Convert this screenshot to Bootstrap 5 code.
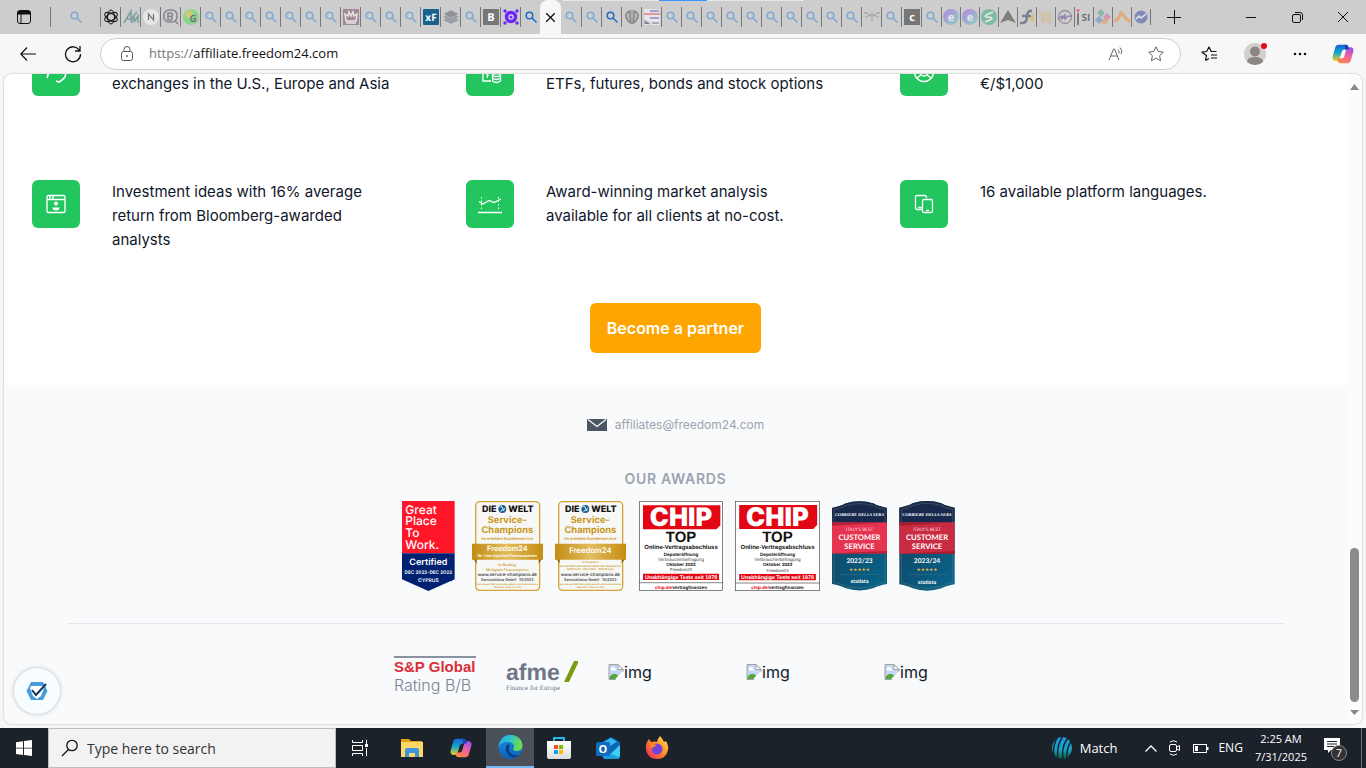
<!DOCTYPE html>
<html lang="en">
<head>
<meta charset="utf-8">
<meta name="viewport" content="width=device-width, initial-scale=1">
<title>Freedom24 affiliate</title>
<link href="https://cdn.jsdelivr.net/npm/bootstrap@5.3.0/dist/css/bootstrap.min.css" rel="stylesheet">
<style>
body{font-family:Inter,"Noto Sans",sans-serif;background:#f7f7f7;color:#0f172a}
svg{display:block;flex:none;text-rendering:geometricPrecision}
.btn{--bs-btn-padding-x:0;--bs-btn-padding-y:0;--bs-btn-border-width:0;line-height:1}
.sysfont{font-family:"Open Sans","Noto Sans",sans-serif}
.tabstrip{background:#cdcdcd;height:34px}
.tabstrip .btn{border-radius:0}
.tab-tools{width:50px}
.tab-cell{width:20px;height:20px;border-left:1px solid #777;display:flex;align-items:center;justify-content:center;flex:none}
.tab-slim{width:19px}
.tab-pinned{width:50px}
.tab-cell .dim{opacity:.5}
.tabstrip .tab-active{width:21px;height:34px;background:#f7f7f7;border-radius:8px 8px 0 0;flex:none}
.loadbar{height:1px;left:563px;width:241px;background:#e8e8e8}
.loadbar span{display:block;height:1px;width:48px;margin-left:96px;background:#3b96f5}
.winbtn{width:46px;height:34px;display:flex;align-items:center;justify-content:center}
.toolbar{height:39px}
.address{height:32px;border:1px solid #cfcfcf;border-radius:16px;background:#fff;margin-left:2px}
.address label{font-size:13px;color:#767676}
.address input{font-size:13px;border:0;outline:0;background:none;color:#111;padding:0}
.pane{background:#fff;border-radius:8px;box-shadow:0 0 2px #00000055;margin:1px 4px 4px;min-height:0}
.features{padding:0 28px;column-gap:15px;row-gap:84px;display:grid;grid-template-columns:repeat(3,1fr);margin-top:-26px}
.feature{gap:32px;font-size:15px;line-height:24px}
.feature p{max-width:284px}
.tile{width:48px;height:48px;border-radius:6px;background:#22c55e;flex:none}
.cta{width:171px;height:50px;font-size:16px;font-weight:600;border-radius:6px}
.cta,.cta:hover{background:#ffa500;color:#fff}
.cta-wrap{padding:51px 0 32px}
.site-footer{background:#f8fafc}
.mail{font-size:12px;line-height:16px;color:#9ca3af;text-decoration:none}
.awards-title{font-size:14px;line-height:20px;font-weight:600;color:#9ca3af;letter-spacing:.05em;padding:12px 0 8px}
.awards{gap:12px}
.rule{border-top:1px solid #e5e7eb;margin:32px 63px 0}
.ratings{gap:30px;padding-top:32px}
.rating-sp{width:82px;border-top:2px solid #8a91a0;font-family:"Liberation Sans",sans-serif;white-space:nowrap}
.rating-sp b{font-size:15px;line-height:18px;color:#dc2f38;display:block}
.rating-sp span{font:300 16px/18px Inter,sans-serif;color:#7b8494;display:block}
.lost{width:108px;font-size:16px;line-height:24px;color:#111827}
.lost-last{width:73px}
.widget{width:46px;height:46px;left:10px;bottom:10px;border-radius:50%;background:#f7fcff;box-shadow:0 0 4px #00000040}
.scroll{width:15px;background:#fcfcfc}
.thumb{width:9px;height:154px;border-radius:5px;background:#8b8b8b}
.taskbar{height:40px;background:#1b222a;color:#fff}
.search{width:288px;background:#f2f2f2;border:1px solid #bdbdbd}
.search input{font-size:14px;border:0;outline:0;background:none;padding:0}
.search input::placeholder{color:#333;opacity:1}
.task{width:48px;height:40px;display:flex;align-items:center;justify-content:center;border-radius:0}
.task-on,.task-on:hover{background:#4b5058;border-bottom:2px solid #76b9f5}
.apps{gap:1px}
.tray{font-size:12px;line-height:18px}
.clock{font-size:11px}
.match{font-size:13px}
</style>
</head>
<body>
<svg width="0" height="0" class="position-absolute" aria-hidden="true">
<defs>
<symbol id="lens" viewBox="0 0 12 12"><circle cx="4.5" cy="4.5" r="3.3" fill="none" stroke="currentColor" stroke-width="1.5"/><path d="M7 7l4 4" stroke="currentColor" stroke-width="1.6" stroke-linecap="round"/></symbol>
<symbol id="broken" viewBox="0 0 16 16"><path d="M1 .5h9l5 5v10H1z" fill="#c4d7f5" stroke="#a0a0a0"/><path d="M10 .5v5h5z" fill="#fff" stroke="#a0a0a0"/><path d="M3 5.500a2 2 0 0 1 4-1 1.500 1.500 0 0 1 1 2H3z" fill="#fff"/><path d="M1.500 15c0-3 2-5 5-5s4 2 4 5z" fill="#57a639"/><path d="M8 16l8-8v8z" fill="#f8fafc"/><path d="M8 15.500l7.500-7.500" stroke="#fff" stroke-width="2"/></symbol>
<linearGradient id="cpa" x1="0" y1="0" x2="0" y2="1"><stop stop-color="#1763dc"/><stop offset=".5" stop-color="#15a8c8"/><stop offset="1" stop-color="#f1d21a"/></linearGradient>
<linearGradient id="cpb" x1="0.700" y1="0" x2="0.200" y2="1"><stop stop-color="#a453e6"/><stop offset=".5" stop-color="#f2649a"/><stop offset="1" stop-color="#fb8a3c"/></linearGradient>
<symbol id="copilot" viewBox="0 0 24 24"><path d="M7 2h8c1.600 0 2.300.8 2.800 2.300L18.500 7H14c-2 0-3 1-3.500 3l-2 7C8 19 7 19.500 5 19.500H4C1 19.500 0 17.500.8 14.500L3.500 5C4.100 3 5.200 2 7 2z" fill="url(#cpa)"/><path d="M17 22H9c-1.600 0-2.300-.8-2.800-2.300L5.500 17H10c2 0 3-1 3.500-3l2-7c.5-2 1.500-2.500 3.500-2.500h1c3 0 4 2 3.200 5L20.500 19c-.6 2-1.700 3-3.500 3z" fill="url(#cpb)"/><path d="M13.800 2h1.200c1.600 0 2.300.8 2.800 2.300L18.500 7h-4.200z" fill="#1b3fae"/></symbol>
<linearGradient id="ega" x1="0" y1="0" x2="1" y2=".3"><stop stop-color="#2aa4e8"/><stop offset=".5" stop-color="#2fc3c9"/><stop offset="1" stop-color="#6ddb4c"/></linearGradient>
<linearGradient id="egb" x1="0" y1="0" x2="0" y2="1"><stop stop-color="#1a8fe0"/><stop offset="1" stop-color="#0a62bd"/></linearGradient>
<linearGradient id="gold"><stop stop-color="#c48c12"/><stop offset=".5" stop-color="#e3bd5f"/><stop offset="1" stop-color="#c48c12"/></linearGradient>
<linearGradient id="teal" x1="0" y1="0" x2="1" y2="1"><stop stop-color="#12415f"/><stop offset="1" stop-color="#07658c"/></linearGradient>
<linearGradient id="ebg" x1="0" y1="0" x2="1" y2="1"><stop stop-color="#9b39f0"/><stop offset="1" stop-color="#4de0c0"/></linearGradient>
<linearGradient id="fox" x1="1" y1="0" x2="0" y2="1"><stop stop-color="#ffe14d"/><stop offset=".5" stop-color="#ff8a25"/><stop offset="1" stop-color="#f5156c"/></linearGradient>
<linearGradient id="bag" x1="0" y1="0" x2="0" y2="1"><stop stop-color="#fff"/><stop offset="1" stop-color="#ddd"/></linearGradient>
<linearGradient id="ball" x1="0" y1="0" x2="0" y2="1"><stop stop-color="#2196dd"/><stop offset=".6" stop-color="#12a5c4"/><stop offset="1" stop-color="#0c5a3a"/></linearGradient>
</defs>
</svg>

<div class="vh-100 d-flex flex-column overflow-hidden">

<header class="tabstrip d-flex align-items-center flex-shrink-0 position-relative overflow-hidden sysfont">
  <div class="loadbar position-absolute top-0"><span></span></div>
  <button class="btn ps-3 tab-tools" aria-label="Tab actions"><svg width="16" height="16" viewBox="0 0 16 16" fill="none" stroke="#111"><rect x="1.500" y="1.500" width="13" height="13" rx="2.500"/><path d="M2 2.500h12v2.500H2z" fill="#111"/><path d="M5 5v9"/></svg></button>
  <nav class="d-flex align-items-center" id="tabs" aria-label="Tabs"></nav>
  <button class="btn winbtn" aria-label="New tab"><svg width="14" height="14" stroke="#111"><path d="M7.500 0v14M0 7.500h14"/></svg></button>
  <div class="d-flex ms-auto">
    <button class="btn winbtn" aria-label="Minimize"><svg width="10" height="10" stroke="#111"><path d="M0 5.500h10"/></svg></button>
    <button class="btn winbtn" aria-label="Restore"><svg width="11" height="11" fill="none" stroke="#111"><rect x=".5" y="2.500" width="8" height="8" rx="1.500"/><path d="M3 .500h5a2.500 2.500 0 0 1 2.500 2.500v5"/></svg></button>
    <button class="btn winbtn" aria-label="Close"><svg width="10" height="10" stroke="#111"><path d="M0 0l10 10M10 0L0 10"/></svg></button>
  </div>
</header>

<div class="toolbar d-flex align-items-center flex-shrink-0 sysfont">
  <button class="btn ms-3 me-4 ps-1" aria-label="Back"><svg width="16" height="14" fill="none" stroke="#111" stroke-width="1.200"><path d="M7 .5L.8 7 7 13.500M1 7h15"/></svg></button>
  <button class="btn ms-1 me-3" aria-label="Refresh"><svg width="18" height="18" fill="none" stroke="#111" stroke-width="1.300"><path d="M15.500 5.500A7.500 7.500 0 1 0 16.500 9M16 1v5h-5"/></svg></button>
  <div class="address d-flex align-items-center flex-grow-1 ps-3 pe-3">
    <svg class="ms-1 me-3" width="12" height="16" fill="none" stroke="#555"><rect x=".5" y="5.500" width="11" height="9" rx="2"/><path d="M3 5V3.500a3 3 0 0 1 6 0V5"/><circle cx="6" cy="10" r=".5" fill="#555"/></svg>
    <label for="url">https://</label><input id="url" class="flex-grow-1" value="affiliate.freedom24.com">
    <button class="btn me-4" aria-label="Read aloud"><svg width="16" height="16" fill="none" stroke="#666"><path d="M1 14L5.500 3h1L11 14M2.500 10h7M10 4q1.500 1.500.8 3.500M12 1.500q3 3 1.200 6.500"/></svg></button>
    <button class="btn" aria-label="Add to favorites"><svg width="16" height="16" viewBox="0 0 16 16" fill="none" stroke="#666" stroke-linejoin="round"><path d="M8 .8l2.200 4.700 5.200.6-3.800 3.500 1 5.200L8 12.200l-4.600 2.600 1-5.200L.6 6.100l5.200-.6z"/></svg></button>
  </div>
  <button class="btn ms-3 ps-1" aria-label="Favorites"><svg width="17" height="16" viewBox="0 0 17 16" fill="none" stroke="#111" stroke-linejoin="round" stroke-width="1.200"><path d="M4.500 14.500l1-5L1 6.200l4.600-.7L8 1l2.200 4.500h5.300M10 9h6M10 12h6M4.500 14.500l3.500-2"/></svg></button>
  <button class="btn ms-4" aria-label="Profile"><svg width="26" height="24"><circle cx="13" cy="12" r="11" fill="#d3d0cc"/><circle cx="13" cy="9.500" r="5" fill="#8b8683"/><path d="M5 20q0-5 8-5t8 5q-8 6-16 0z" fill="#8b8683"/><circle cx="22" cy="4" r="3" fill="#e00b1c"/></svg></button>
  <button class="btn ms-4" aria-label="Settings and more"><svg width="16" height="4" fill="#111"><circle cx="3" cy="2" r="1.300"/><circle cx="8" cy="2" r="1.300"/><circle cx="13" cy="2" r="1.300"/></svg></button>
  <button class="btn ms-4 me-2 pe-1" aria-label="Copilot"><svg width="22" height="24" viewBox="0 0 24 24"><use href="#copilot"/></svg></button>
</div>

<div class="pane d-flex flex-grow-1 overflow-hidden position-relative">
  <main class="flex-grow-1 overflow-hidden d-flex flex-column">
    <section class="features">
      <div class="feature d-flex">
        <div class="tile"><svg width="48" height="48" fill="none" stroke="#fff" stroke-width="1.600"><path d="M15 30q2-6 0-4l2-2M15 30l2-6M28 20q10 6 2 12l-3 2-3-1"/></svg></div>
        <p class="m-0 pt-4">exchanges in the U.S., Europe and Asia</p>
      </div>
      <div class="feature d-flex">
        <div class="tile"><svg width="48" height="48" fill="none" stroke="#fff" stroke-width="1.300"><path d="M25 33h-8V20h9v5"/><path d="M23 24q-3-1-3 1t2 1.500q2 1-2 2M21.500 23v7" stroke-width="1"/><ellipse cx="30.500" cy="27" rx="4" ry="1.500"/><path d="M26.500 27v6q4 3 8 0v-6M26.500 30q4 3 8 0"/></svg></div>
        <p class="m-0 pt-4">ETFs, futures, bonds and stock options</p>
      </div>
      <div class="feature d-flex">
        <div class="tile"><svg width="48" height="48" fill="none" stroke="#fff" stroke-width="1.500"><circle cx="24" cy="24" r="9.500"/><circle cx="24" cy="24" r="4"/><path d="M21 27l-4 3M27 27l4 3"/></svg></div>
        <p class="m-0 pt-4">€/$1,000</p>
      </div>
      <div class="feature d-flex">
        <div class="tile"><svg width="48" height="48" fill="none" stroke="#fff" stroke-width="1.400"><rect x="15" y="15.500" width="18" height="17" rx="1.500"/><path d="M15 19.500h18M18 16v3M21 16v3"/><circle cx="24" cy="23.500" r="2" fill="#fff" stroke="none"/><path d="M20.500 27.500h7q0 3-3.500 3t-3.500-3z" fill="#fff" stroke="none"/></svg></div>
        <p class="m-0">Investment ideas with 16% average return from Bloomberg-awarded analysts</p>
      </div>
      <div class="feature d-flex">
        <div class="tile"><svg width="48" height="48" fill="none" stroke="#fff" stroke-width="1.300"><path d="M12 32.500h24M13 21.500l4 2.500 6-3.500 5 2 7-3.500"/><path d="M15.500 17v13M32.500 17v13" stroke-dasharray="1.500 2" stroke-width="1"/></svg></div>
        <p class="m-0">Award-winning market analysis available for all clients at no-cost.</p>
      </div>
      <div class="feature d-flex">
        <div class="tile"><svg width="48" height="48" fill="none" stroke="#fff" stroke-width="1.300"><path d="M22 29.500h-5a1.500 1.500 0 0 1-1.500-1.500V17a1.500 1.500 0 0 1 1.500-1.500h8a1.500 1.500 0 0 1 1.500 1.500v1M18 27.500h4"/><rect x="22.500" y="19.500" width="10" height="13" rx="1.500"/><path d="M26 30.500h3"/></svg></div>
        <p class="m-0">16 available platform languages.</p>
      </div>
    </section>
    <div class="cta-wrap text-center"><button class="btn cta">Become a partner</button></div>

    <footer class="site-footer flex-grow-1 pt-4">
      <div class="d-flex justify-content-center align-items-center pt-2">
        <svg class="me-2" width="20" height="12"><path d="M0 0h20v12H0z" fill="#4b5563"/><path d="M1 .5l9 7 9-7" fill="none" stroke="#f8fafc" stroke-width="1.300"/></svg>
        <a class="mail" href="#">affiliates@freedom24.com</a>
      </div>
      <h2 class="awards-title text-center mb-0 mt-4">OUR AWARDS</h2>
      <div class="awards d-flex justify-content-center mt-1" id="awards">
        <svg width="64" height="90" viewBox="0 0 192 270" font-family="Inter" fill="#fff" font-weight="600">
          <path d="M18 0h158v157H18z" fill="#ff1628"/><path d="M18 157h158v78l-79 35-79-35z" fill="#002171"/>
          <g font-size="36" font-weight="500"><text x="28" y="39">Great</text><text x="28" y="73">Place</text><text x="28" y="108">To</text><text x="28" y="143">Work.</text></g>
          <g text-anchor="middle"><text x="97" y="192" font-size="27">Certified</text><text x="97" y="218" font-size="14">DEC 2022-DEC 2023</text><text x="97" y="243" font-size="15">CYPRUS</text></g>
          <text x="162" y="245" font-size="12" fill="#002171">™</text>
        </svg>
      </div>
      <div class="rule"></div>
      <div class="ratings d-flex justify-content-center align-items-start">
        <div class="rating-sp"><b>S&amp;P Global</b><span>Rating B/B</span></div>
        <svg class="mt-1" width="72" height="32"><text x="0" y="20" font-family="Liberation Sans" font-weight="700" font-size="23" fill="#6f7786">afme</text><path d="M68 1h5L63 22h-5z" fill="#7a9a12"/><text x="0" y="30" font-family="Liberation Serif" font-size="7" fill="#6f7786">Finance for Europe</text></svg>
        <div class="lost d-flex mt-1"><svg class="mt-1" width="16" height="16"><use href="#broken"/></svg>img</div>
        <div class="lost d-flex mt-1"><svg class="mt-1" width="16" height="16"><use href="#broken"/></svg>img</div>
        <div class="lost lost-last d-flex mt-1"><svg class="mt-1" width="16" height="16"><use href="#broken"/></svg>img</div>
      </div>
    </footer>
  </main>
  <div class="scroll d-flex flex-column align-items-center pb-2 pt-2 flex-shrink-0" aria-hidden="true">
    <svg width="9" height="10"><path d="M0 8l4.500-6L9 8z" fill="#888"/></svg>
    <div class="thumb mt-auto mb-2"></div>
    <svg width="9" height="6"><path d="M0 0l4.500 5L9 0z" fill="#888"/></svg>
  </div>
  <button class="btn widget position-absolute d-flex align-items-center justify-content-center" aria-label="Accessibility"><svg width="22" height="20"><path d="M5 1h12l4.500 9-4.500 9H5L.5 10z" fill="#4a9bdc"/><path d="M5 5h12l1 2-3 8-4 3-4-3-3-8z" fill="#fff"/><path d="M6 9l4 5L20 3" fill="none" stroke="#12355f" stroke-width="2"/></svg></button>
</div>

<footer class="taskbar d-flex flex-shrink-0 sysfont">
  <button class="btn task" aria-label="Start"><svg width="16" height="16" fill="#fff"><path d="M0 2.200l7-1v6.500H0zM8 1l8-1v7.700H8zM0 8.500h7v6.400l-7-1zM8 8.500h8V16l-8-1z"/></svg></button>
  <div class="search d-flex align-items-center ps-2">
    <svg class="ms-1 me-2" width="18" height="18" fill="none" stroke="#111" stroke-width="1.300"><circle cx="11" cy="6.500" r="5.200"/><path d="M7.500 10.500L1 17"/></svg>
    <input class="flex-grow-1" aria-label="Search" placeholder="Type here to search">
  </div>
  <button class="btn task me-1" aria-label="Task view"><svg width="18" height="16" fill="none" stroke="#fff"><path d="M1.500 0v2.500h10V0M1.500 5.500h10v5h-10zM1.500 16v-2.500h10V16M15.500 0v4M15.500 8v8"/><path d="M14 4h3v3h-3z" fill="#fff" stroke="none"/></svg></button>
  <div class="d-flex apps">
  <button class="btn task" aria-label="File Explorer"><svg width="22" height="20"><path d="M0 1h8l2 2h11v16H0z" fill="#e3a21a"/><path d="M0 4h22v15H0z" fill="#ffd766"/><path d="M4 19v-7q0-2 2-2h10q2 0 2 2v7h-4v-4H8v4z" fill="#3f95d9"/></svg></button>
  <button class="btn task" aria-label="Copilot"><svg width="22" height="24" viewBox="0 0 24 24"><use href="#copilot"/></svg></button>
  <button class="btn task task-on" aria-label="Edge"><svg width="25" height="24" viewBox="0 0 24 24"><circle cx="12" cy="12" r="12" fill="url(#egb)"/><path d="M0 12C1 4 6 0 12 0c7 0 12 5 12 10.500 0 4-3 5.500-6 5.500-2 0-3.500-.8-3.500-1.500s1-1 1-3C15.500 9 13 7 9.500 7 5 7 1 9 0 12z" fill="url(#ega)"/><path d="M9 9.500c-3 3-2 9 2 11.500 3 2 7 2 10.500-1-3 1-7 .5-9-1.500-2.500-2.500-2.500-5-1.500-7 .5-1 .5-2-2-2z" fill="#0b3f80"/></svg></button>
  <button class="btn task" aria-label="Store"><svg width="24" height="24"><path d="M7 6V2h10v4" fill="none" stroke="#29b6e8" stroke-width="2"/><path d="M0 5h24v16q0 2-2 2H2q-2 0-2-2z" fill="url(#bag)"/><path d="M7 9h4v4H7z" fill="#f25022"/><path d="M12 9h4v4h-4z" fill="#7fba00"/><path d="M7 14h4v4H7z" fill="#00a4ef"/><path d="M12 14h4v4h-4z" fill="#ffb900"/></svg></button>
  <button class="btn task" aria-label="Outlook"><svg width="24" height="22"><path d="M6 5l9-5 9 5v13q0 4-4 4H10q-4 0-4-4z" fill="#1066b5"/><path d="M8 5l7-4 6 3.500-9 6z" fill="#35b8f1"/><path d="M24 8v10q0 4-4 4H9z" fill="#3fcdf5"/><path d="M7 13l17 8q-2 1-4 1H10q-3 0-3-3z" fill="#1b9de2"/><rect y="5" width="14" height="14" rx="1.500" fill="#0f6cbd"/><text x="7" y="16" text-anchor="middle" font-size="11" font-weight="700" fill="#fff">O</text></svg></button>
  <button class="btn task" aria-label="Firefox"><svg width="24" height="24"><path d="M15 0q3 3 4 6l2-1q3 5 2 9-2 9-11 9T1 14q-1-6 3-11l2 3q4-1 6 0 1-4 3-6z" fill="url(#fox)"/><circle cx="12" cy="13" r="5.500" fill="#7442dd"/><path d="M4 8q5-1 8 2-4 0-5 3-2-1-3-5z" fill="#ff8525"/></svg></button>
  </div>
  <div class="tray d-flex align-items-center ms-auto">
    <svg width="20" height="22"><ellipse cx="10" cy="11" rx="10" ry="11" fill="url(#ball)"/><path d="M6-1Q0 9 2 20M11-1Q4 9 6 23M16 1Q9 9 11 23M20 3q-6 8-5 19" fill="none" stroke="#1b222a" stroke-width="1.500"/></svg>
    <span class="match ms-2 me-4 pe-1">Match</span>
    <svg width="12" height="7" fill="none" stroke="#fff" stroke-width="1.300"><path d="M.5 6.500L6 1l5.500 5.500"/></svg>
    <svg class="ms-2 ps-1 me-2" width="16" height="16" fill="none" stroke="#fff"><rect x=".5" y="4.500" width="7" height="7" rx="1.500"/><path d="M8 7l2.500-1.500v5L8 9M1 2q3.500-2.500 7 0M1 14q3.500 2.500 7 0"/></svg>
    <svg class="ms-1" width="17" height="9" fill="none" stroke="#fff"><rect x=".5" y=".5" width="13" height="8"/><path d="M2 2h3v5H2zM14 3h1.500v3H14z" fill="#fff" stroke="none"/></svg>
    <span class="ms-2 me-2">ENG</span>
    <span class="clock text-center ms-1">2:25 AM<br>7/31/2025</span>
    <button class="btn ms-3 me-2 pe-1" aria-label="Notifications"><svg width="26" height="28"><path d="M1 4h16v12H8l-3 3v-3H1z" fill="#fff"/><path d="M4 7.500h10M4 10h10M4 12.500h7" stroke="#1b222a"/><circle cx="16" cy="19" r="7.500" fill="#333" stroke="#888"/><text x="16" y="23" font-size="11" text-anchor="middle" fill="#fff">7</text></svg></button>
    <span class="border-start border-secondary ps-1 h-100"></span>
  </div>
</footer>
</div>

<script>
// Tab strip: each entry is a favicon; "s" is a search page, "S" a search page that is loaded.
const icon = (body, dim = true) => `<svg class="${dim ? 'dim' : ''}" width="16" height="16" viewBox="0 0 16 16">${body}</svg>`;
const box = (fill, letter, rx = 0, size = 11) => `<rect width="16" height="16" rx="${rx}" fill="${fill}"/><text x="8" y="12" font-size="${size}" font-weight="700" text-anchor="middle" fill="#fff">${letter}</text>`;
const art = {
  s: '<svg width="12" height="12" color="#7fa9d2"><use href="#lens"/></svg>',
  S: '<svg width="12" height="12" color="#1a6fc4"><use href="#lens"/></svg>',
  ai: icon('<g fill="none" stroke="#111"><ellipse cx="8" cy="8" rx="3.500" ry="7"/><ellipse cx="8" cy="8" rx="3.500" ry="7" transform="rotate(60 8 8)"/><ellipse cx="8" cy="8" rx="3.500" ry="7" transform="rotate(120 8 8)"/></g>', false),
  am: icon('<path d="M1 14L8 2v11M3 10h5l6-7M9 14l2-6 1 4 3-5v7" fill="none" stroke="#2f7076" stroke-width="1.500"/>'),
  n: icon('<circle cx="8" cy="8" r="8" fill="#fff"/><path d="M5.500 11V5l5 6V5" fill="none" stroke="#224" stroke-width="1.300"/>'),
  b: icon('<g fill="none" stroke="#445" stroke-width="1.600"><rect x="1" y="1" width="13" height="12" rx="5"/><path d="M5 4v7h3a2 2 0 0 0 0-3.500H5h3A1.800 1.800 0 0 0 8 4zM12 12l3 3"/></g>'),
  g: icon('<circle cx="8" cy="8" r="8" fill="#4ade50"/><circle cx="6" cy="5" r="3.500" fill="#d5c820"/><text x="10" y="13" font-size="10" font-weight="700" text-anchor="middle" fill="#222">G</text>'),
  crown: icon('<path d="M0 0h16v16H0z" fill="#7a4560"/><path d="M3 12L2 5l3 2 1-4 2 4 2-4 1 4 3-2-1 7zM3 14h10" fill="none" stroke="#fff" stroke-width="1.500"/>'),
  xf: icon(box('#17618f', 'xF', 1, 10), false),
  layers: icon('<path d="M0 11l8-4 8 4-8 4zM0 8l8-4 8 4-8 4z" fill="#66727c"/><path d="M0 5l8-4 8 4-8 4z" fill="#4d5963" stroke="#cdcdcd" stroke-width=".5"/>'),
  B: icon(box('#767676', 'B', 1, 11), false),
  purple: icon('<circle cx="8" cy="8" r="4.500" fill="#fff" fill-opacity=".3" stroke="#6d28f5" stroke-width="3.500"/><g fill="#6d28f5"><circle cx="2" cy="2" r="1.700"/><circle cx="14" cy="2" r="1.700"/><circle cx="2" cy="14" r="1.700"/><circle cx="14" cy="14" r="1.700"/></g><circle cx="8" cy="8" r="1.500" fill="#6d28f5"/>', false),
  globe: icon('<path d="M6 2Q1 4 2 8t5 6q-2-6-1-12zM10 2q5 2 4 6t-5 6q2-6 1-12z" fill="#aaa" stroke="#444" stroke-width="1.500"/><path d="M8 1v14" stroke="#444"/>'),
  page: icon('<path d="M0 0h16v16H0z" fill="#fff"/><path d="M6 2h9M6 9h9" stroke="#7474d8" stroke-width="2"/><path d="M0 5h16" stroke="#e83a4a" stroke-width="1.500"/><path d="M1 15v-3l5 3M8 14h7" stroke="#669" stroke-width="1.500"/>'),
  fly: icon('<path d="M8 3v10M0 4q3-1 5 2h6q2-3 5-2M1 8l7-2 7 2" fill="none" stroke="#888" stroke-width="1.300"/>'),
  C: icon(box('#767676', 'c', 0, 11), false),
  e: icon('<circle cx="8" cy="8" r="8" fill="url(#ebg)"/><text x="8" y="12" font-size="11" font-weight="700" text-anchor="middle" fill="#fff">e</text>'),
  swirl: icon('<circle cx="8" cy="8" r="8" fill="#2faa7d"/><path d="M12 3L5 6q-2 2 1 2l4 .5q2 1 0 2L4 13" fill="none" stroke="#fff" stroke-width="1.600"/>'),
  arrow: icon('<path d="M8 1l8 13-8-3-8 3z" fill="#333"/>'),
  f: icon('<path d="M10 9l5-5v10z" fill="#e8b02c"/><path d="M13 2Q8 1 8 8t-7 6M3 7h9" fill="none" stroke="#223c60" stroke-width="2.500"/>'),
  dots: icon('<rect x="1" y="1" width="14" height="14" fill="#ccb58c" opacity=".3"/><path d="M4 4h3v3H4zM9 4h3v3H9zM4 9h3v3H4zM9 9h3v3H9z" fill="none" stroke="#d7a33e" opacity=".7"/>'),
  ring: icon('<circle cx="8" cy="8" r="6.500" fill="none" stroke="#657" stroke-width="1.300"/><path d="M1 10l4-3v3l3-4v4l3-3q2 1 4-1" fill="none" stroke="#538" stroke-width="1.300"/>'),
  si: icon('<path d="M2 4v12" stroke="#333" stroke-width="2"/><circle cx="2" cy="1.500" r="1.500" fill="#f05"/><text x="10" y="12" font-size="10" font-weight="700" text-anchor="middle" fill="#222">SI</text>'),
  gems: icon('<path d="M6 0l4 4-4 4-4-4z" fill="#4aab87"/><path d="M12 4l4 4-4 4-4-4z" fill="#d3618d"/><path d="M4 7l4 4-4 4-4-4z" fill="#4c86cc"/><path d="M9 9l4 4-4 3-3-3z" fill="#ef8c4b"/>'),
  hill: icon('<path d="M0 12q4 0 7-8l4 4q2 4 5 4" fill="none" stroke="#f08a2c" stroke-width="3"/>'),
  chart: icon('<circle cx="8" cy="8" r="6.500" fill="#3646a8"/><path d="M3 10l3-3 2 2 5-4" fill="none" stroke="#fff" stroke-width="1.500"/>')
};
const close = '<button class="btn tab-active d-flex align-items-center justify-content-center" aria-label="Close tab"><svg width="9" height="9" stroke="#111" stroke-width="1.300"><path d="M0 0l9 9M9 0L0 9"/></svg></button>';
const list = 's ai am n b g s s s s s s s crown s s s xf layers s B purple S * s s S globe page s s s s s s s s s s fly s C s e e swirl arrow f dots ring si gems hill chart'.split(' ');
document.getElementById('tabs').innerHTML = list.map((k, i) => k === '*' ? close :
  `<button class="btn tab-cell ${i === 0 ? 'tab-pinned' : i > 42 ? 'tab-slim' : ''} ${i === 24 ? 'border-0' : ''}" aria-label="Tab ${i + 1}">${art[k]}</button>`).join('')
  + '<span class="border-start border-secondary py-2"></span>';

// Award badges, drawn on a grid of three units to the pixel.
const t = (x, y, size, fill, text, more = '') => `<text x="${x}" y="${y}" font-size="${size}" fill="${fill}" ${more}>${text}</text>`;
const welt = (w, ribbon, lines) => `<svg width="${w}" height="90" viewBox="0 0 ${w * 3} 270" font-family="Inter" font-weight="600" text-anchor="middle">
  <rect x="11" y="2" width="192" height="266" rx="12" fill="#f7f7f5" stroke="#d5a436" stroke-width="4"/>
  ${t(52, 34, 27, '#111', 'DIE', 'font-weight="800"')}${t(147, 34, 27, '#111', 'WELT', 'font-weight="800"')}
  <circle cx="91" cy="24" r="12" fill="#1b5f96"/><path d="M82 18q8-6 9 3t9 0M86 32q4-8 11-4" stroke="#fff" stroke-width="3" fill="none"/>
  ${t(106, 67, 28, '#c9981f', 'Service-', 'font-weight="700"')}${t(106, 97, 28, '#c9981f', 'Champions', 'font-weight="700"')}${t(106, 118, 12, '#c9981f', 'im erlebten Kundenservice')}
  <path d="M2 170h12v18zM212 170h-12v18z" fill="#8a600b"/><path d="M0 128h213v48H0z" fill="url(#gold)"/>
  ${ribbon}${lines}
  ${t(106, 225, 13, '#444', 'www.service-champions.de')}${t(106, 240, 11, '#444', 'ServiceValue GmbH &#160; 10/2023')}
  ${t(106, 252, 7, '#c9981f', 'Servicewert AG Fachverlag gesamt und Auszeichnung')}${t(106, 262, 7, '#c9981f', 'Werte für urban zur hilft')}</svg>`;
const chip = (w, year) => `<svg width="${w}" height="90" viewBox="0 0 254 270" font-family="Liberation Sans" font-weight="700" text-anchor="middle">
  <rect x="1" y="1" width="252" height="268" fill="#fff" stroke="#444" stroke-width="2"/><path d="M12 12h234v60l-12 12H12z" fill="#e30613"/>
  ${t(127, 75, 77, '#fff', 'CHIP', 'font-family="Inter" font-weight="900"')}${t(127, 123, 45, '#111', 'TOP')}
  ${t(127, 143, 18, '#111', 'Online-Vertragsabschluss')}${t(127, 165, 14, '#111', 'Depoteröffnung')}${t(127, 181, 14, '#444', 'Verbraucherbefragung', 'font-weight="400"')}
  ${t(127, 196, 14, '#111', 'Oktober ' + year)}${t(127, 212, 13, '#333', 'Freedom24', 'font-weight="400"')}
  <path d="M12 219h230v19H12z" fill="#e30613"/>${t(127, 234, 16, '#fff', 'Unabhängige Tests seit 1978')}
  <path d="M0 246h254" stroke="#444" stroke-width="2"/><text x="127" y="264" font-size="14" fill="#111"><tspan fill="#e30613">chip.de/</tspan>vertragfinanzen</text></svg>`;
const italy = (w, red, dark, years) => `<svg width="${w}" height="90" viewBox="0 0 166 270" font-family="Lato" font-weight="700" text-anchor="middle">
  <path d="M0 20Q25 16 40 7 83-7 126 7q15 9 40 13v230q-25 4-40 12-43 14-86 0-15-8-40-12z" fill="url(#teal)"/>
  <path d="M0 20Q25 16 40 7 83-7 126 7q15 9 40 13v44H0z" fill="#172a4d"/>
  <path d="M6 25q22-4 37-12 40-12 80 0 15 8 37 12v220q-22 4-37 11-40 12-80 0-15-7-37-11z" fill="none" stroke="#8f8968" stroke-width="1"/>
  <path d="M0 64h166v94H0z" fill="${red}"/><path d="M0 64h166l-166 10zM0 158h166v-8z" fill="${dark}"/>
  ${t(83, 44, 13, '#fff', 'CORRIERE DELLA SERA', 'font-family="Liberation Serif" font-style="italic"')}
  ${t(83, 91, 14, '#ffdce0', 'ITALY’S BEST', 'font-weight="400"')}${t(83, 117, 23, '#fff', 'CUSTOMER')}${t(83, 143, 23, '#fff', 'SERVICE')}
  ${t(83, 185, 20, '#fff', years)}${t(83, 209, 14, '#efb646', '★★★★★', 'font-family="DejaVu Sans"')}
  <path d="M26 221h116" stroke="#5a8499" stroke-width="1"/>${t(83, 248, 15, '#fff', 'statista', 'font-family="Inter"')}</svg>`;
document.getElementById('awards').insertAdjacentHTML('beforeend',
  welt(71, t(106, 150, 22, '#fff', 'Freedom24') + t(106, 169, 11, '#fff', 'Nr. 1 der digitalen Finanzexperten'), t(106, 196, 10, '#c9981f', 'Im Ranking:') + t(106, 209, 10, '#c9981f', '69 digitale Finanzexperten')) +
  welt(72, t(106, 156, 23, '#fff', 'Freedom24'), t(106, 187, 8, '#c9981f', 'Im Vergleich:') + t(106, 197, 8, '#c9981f', 'über 4.500 Unternehmen Branchen Rangverlauf') + t(106, 207, 8, '#c9981f', '4000 Gold · 400 Silber · 400 Bronze')) +
  chip(84, '2023') + chip(85, '2022') +
  italy(55, '#e63350', '#b81f35', '2022/23') + italy(56, '#c92c42', '#a01d30', '2023/24'));
</script>
<script src="https://cdn.jsdelivr.net/npm/bootstrap@5.3.0/dist/js/bootstrap.bundle.min.js"></script>
</body>
</html>
